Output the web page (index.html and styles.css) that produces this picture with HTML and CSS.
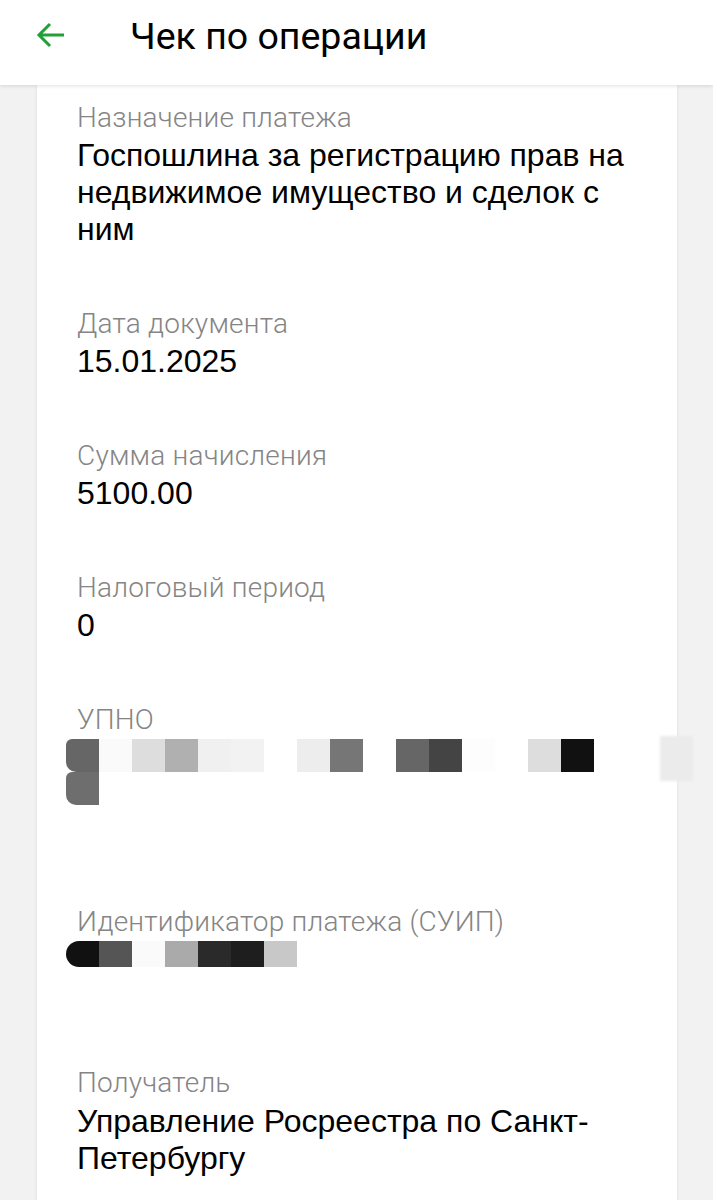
FILE: index.html
```html
<!DOCTYPE html>
<html lang="ru">
<head>
<meta charset="utf-8">
<title>Чек по операции</title>
<link rel="stylesheet" href="styles.css">
</head>
<body>
<header class="topbar">
  <svg class="back" viewBox="0 0 30 28" width="30" height="28" aria-hidden="true">
    <path d="M28 14H4M14 3L3 14L14 25" fill="none" stroke="#21a038" stroke-width="3" stroke-linecap="butt" stroke-linejoin="miter"/>
  </svg>
  <h1 class="title">Чек по операции</h1>
</header>
<main class="card">
  <section class="field">
    <div class="label">Назначение платежа</div>
    <div class="value">Госпошлина за регистрацию прав на недвижимое имущество и сделок с ним</div>
  </section>
  <section class="field">
    <div class="label">Дата документа</div>
    <div class="value">15.01.2025</div>
  </section>
  <section class="field">
    <div class="label">Сумма начисления</div>
    <div class="value">5100.00</div>
  </section>
  <section class="field">
    <div class="label">Налоговый период</div>
    <div class="value">0</div>
  </section>
  <section class="field">
    <div class="label">УПНО</div>
    <div class="mask mask-upno">
      <div class="mrow">
        <span class="px s66 blur-l"></span><span class="px sfa"></span><span class="px sdd"></span><span class="px sb0"></span><span class="px sf0"></span><span class="px sf2"></span><span class="px"></span><span class="px sed"></span><span class="px s76"></span><span class="px"></span><span class="px s66"></span><span class="px s44"></span><span class="px sfd"></span><span class="px"></span><span class="px sdd"></span><span class="px s11"></span><span class="px"></span><span class="px"></span><span class="px seb tall"></span>
      </div>
      <div class="mrow">
        <span class="px s6e blur-l"></span>
      </div>
    </div>
  </section>
  <section class="field">
    <div class="label">Идентификатор платежа (СУИП)</div>
    <div class="mask mask-suip">
      <div class="mrow short">
        <span class="px s11 round-l"></span><span class="px s55"></span><span class="px sfa"></span><span class="px saa"></span><span class="px s2a"></span><span class="px s1e"></span><span class="px sc8"></span>
      </div>
    </div>
  </section>
  <section class="field">
    <div class="label">Получатель</div>
    <div class="value">Управление Росреестра по Санкт-Петербургу</div>
  </section>
</main>
</body>
</html>
```

FILE: styles.css
```css
* { box-sizing: border-box; }
html, body {
  margin: 0;
  padding: 0;
  background: #f2f2f2;
}
body {
  font-family: "Liberation Sans", Arial, sans-serif;
  color: #000;
}
.topbar {
  height: 85px;
  background: #fff;
  display: flex;
  align-items: center;
  padding-left: 36px;
  box-shadow: 0 1px 4px rgba(0,0,0,0.12);
  position: relative;
  z-index: 2;
}
.back {
  flex: none;
  margin-top: -16px;
}
.title {
  margin: -13px 0 0 64px;
  font-family: Roboto, "Liberation Sans", sans-serif;
  font-weight: 400;
  font-size: 37.5px;
  line-height: 44px;
  color: #000;
}
.card {
  margin: 0 36px 0 37px;
  background: #fff;
  padding: 17px 40px 40px 40px;
  box-shadow: 0 0 3px rgba(0,0,0,0.10);
  min-height: 1115px;
}
.field + .field {
  margin-top: 60px;
}
.field:last-child {
  margin-top: 62px;
}
.label {
  font-family: Roboto, "Liberation Sans", sans-serif;
  font-weight: 300;
  font-size: 28px;
  line-height: 32px;
  letter-spacing: 0.2px;
  color: #858585;
  margin-bottom: 3px;
}
.value {
  font-size: 32px;
  line-height: 37px;
  color: #000;
}
.field:last-child .value {
  margin-top: 4px;
}
.mask {
  margin-left: -11px;
}
.mask-upno { height: 107px; }
.mask-suip { height: 64px; }
.mrow {
  display: flex;
  height: 33px;
}
.mrow.short { height: 26px; }
.px {
  flex: none;
  width: 33px;
  height: 100%;
}
.px.tall {
  height: 45px;
  margin-top: -3px;
  filter: blur(1.5px);
}
.blur-l { border-radius: 6px 0 0 10px; }
.round-l { border-radius: 13px 0 0 13px; filter: blur(0.6px); }
.s11 { background: #111; }
.s1e { background: #1e1e1e; }
.s2a { background: #2a2a2a; }
.s44 { background: #444; }
.s55 { background: #555; }
.s66 { background: #666; }
.s6e { background: #6e6e6e; }
.s76 { background: #767676; }
.saa { background: #aaa; }
.sb0 { background: #b0b0b0; }
.sc8 { background: #c8c8c8; }
.sdd { background: #ddd; }
.seb { background: #ebebeb; }
.sed { background: #ededed; }
.sf0 { background: #f0f0f0; }
.sf2 { background: #f2f2f2; }
.sfa { background: #fafafa; }
.sfd { background: #fdfdfd; }
```
